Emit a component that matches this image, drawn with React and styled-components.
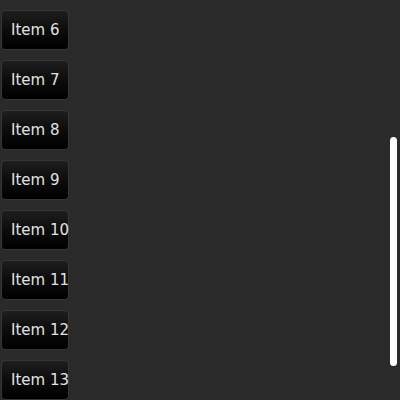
import React from 'react'
import styled, { createGlobalStyle } from 'styled-components'

const GlobalStyle = createGlobalStyle`
  html, body {
    margin: 0;
    padding: 0;
    background: #2a2a2a;
  }
  body {
    font-family: "DejaVu Sans", sans-serif;
  }
`

const Viewport = styled.div`
  position: relative;
  width: 400px;
  height: 400px;
  overflow: hidden;
  background: #2a2a2a;
`

const List = styled.div`
  display: flex;
  flex-direction: column;
  align-items: flex-start;
  gap: 10px;
  padding: 10px 0 0 1px;
`

// fixed width: longer labels spill past the right padding
const ItemButton = styled.button`
  box-sizing: border-box;
  width: 68px;
  height: 40px;
  padding: 1px 9px 0;
  border: 1px solid #363636;
  border-radius: 4px;
  background: linear-gradient(to bottom, #1e1e1e 0%, #0c0c0c 50%, #000 100%);
  color: #e2e2e2;
  font-family: "DejaVu Sans", sans-serif;
  font-size: 15px;
  line-height: 37px;
  text-align: left;
  white-space: nowrap;
  overflow: visible;
`

const ScrollThumb = styled.div`
  position: absolute;
  left: 390px;
  top: 137px;
  width: 7px;
  height: 229px;
  border-radius: 4px;
  background: #fff;
`

const items = [6, 7, 8, 9, 10, 11, 12, 13]

const App = () => {
  return (
    <>
      <GlobalStyle />
      <Viewport>
        <List>
          {items.map(n => (
            <ItemButton key={n}>Item {n}</ItemButton>
          ))}
        </List>
        <ScrollThumb />
      </Viewport>
    </>
  )
}

export default App
